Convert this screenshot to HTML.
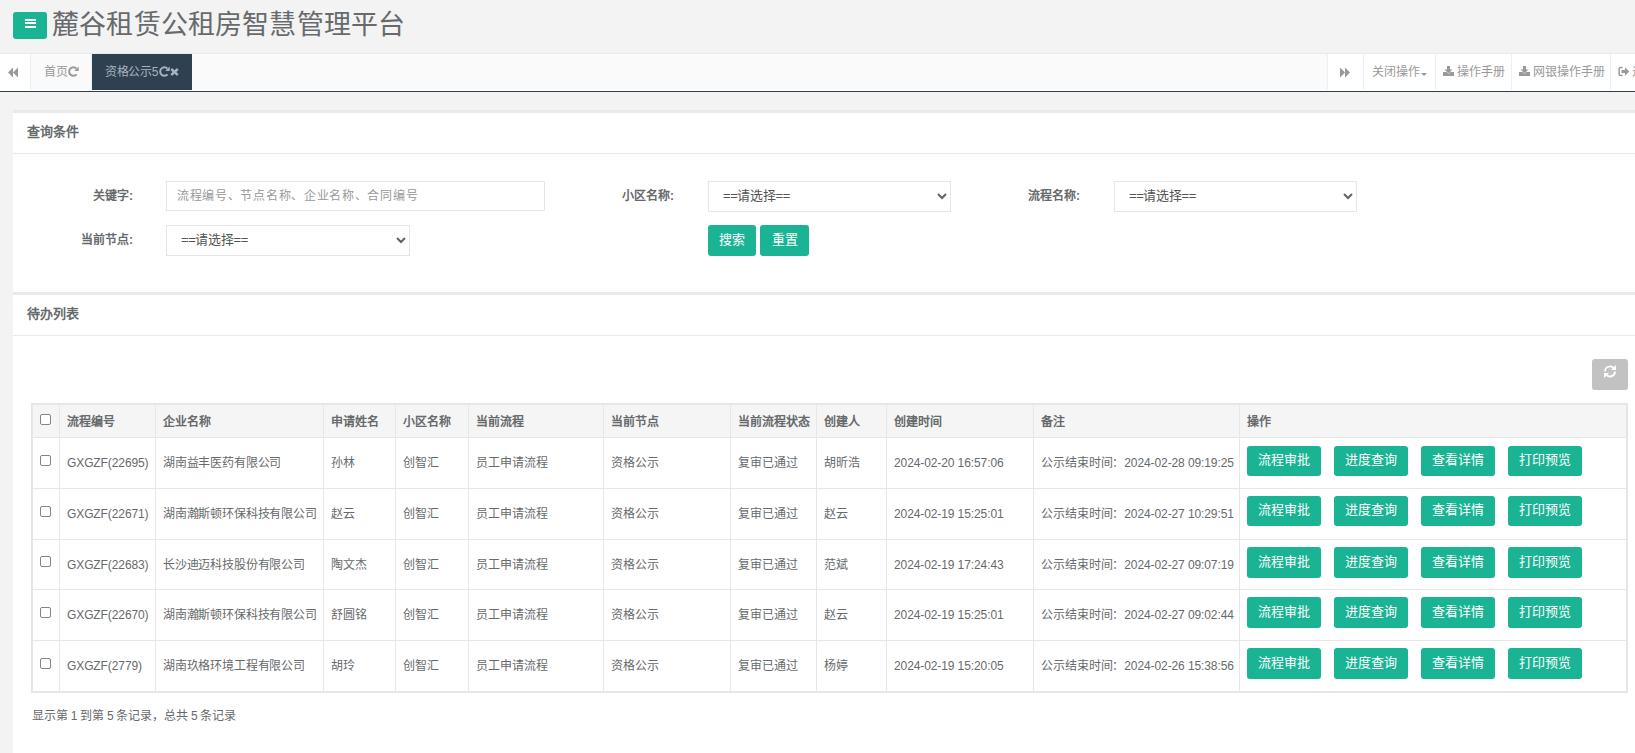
<!DOCTYPE html>
<html lang="zh-CN"><head><meta charset="utf-8"><style>
html,body{margin:0;padding:0;}
body{width:1635px;height:753px;overflow:hidden;position:relative;background:#f3f3f4;font-family:"Liberation Sans", sans-serif;}
body>div,body>svg{position:absolute;}
.t{white-space:nowrap;}
.ic{font-size:12px;}
.lbl{font-size:12px;font-weight:bold;color:#676a6c;line-height:16px;}
.inp{border:1px solid #e5e6e7;background:#fff;}
.btn{background:#1ab394;color:#fff;border-radius:3px;text-align:center;white-space:nowrap;}
.cb{width:9px;height:9px;border:1px solid #858585;border-radius:2px;background:#fff;}
</style></head><body>
<div style="left:0px;top:0px;width:1635px;height:53px;background:#f3f3f4"></div>
<div style="left:13px;top:12px;width:34px;height:27px;background:#1ab394;border-radius:3px"></div>
<div style="left:24.6px;top:18.8px;width:11.9px;height:2.1px;background:#fff"></div>
<div style="left:24.6px;top:22.4px;width:11.9px;height:2.1px;background:#fff"></div>
<div style="left:24.6px;top:26px;width:11.9px;height:2.1px;background:#fff"></div>
<div class="t" style="left:52px;top:7px;font-size:27px;line-height:36px;color:#676a6c;letter-spacing:0.18px">麓谷租赁公租房智慧管理平台</div>
<div style="left:0px;top:53px;width:1635px;height:1px;background:#e7eaec"></div>
<div style="left:0px;top:54px;width:1635px;height:36px;background:#fafafa"></div>
<div style="left:0px;top:90px;width:1635px;height:1px;background:#fff"></div>
<div style="left:0px;top:91px;width:1635px;height:1px;background:#2f4050"></div>
<div style="left:0px;top:54px;width:30px;height:36px;background:#fff"></div>
<div style="left:30px;top:54px;width:1px;height:36px;background:#eee"></div>
<svg style="left:8px;top:67px" width="11" height="11" viewBox="0 0 11 11"><path d="M0 5.5 L5 0.5 V10.5Z M5 5.5 L10 0.5 V10.5Z" fill="#999"/></svg>
<div style="left:91px;top:54px;width:1px;height:36px;background:#eee"></div>
<div class="t" style="left:44px;top:64px;font-size:12px;line-height:16px;color:#999;">首页</div>
<svg style="left:68px;top:66px" width="11" height="11" viewBox="0 0 11 11"><path d="M8.6 8.3A4.2 4.2 0 1 1 8.4 2.6" stroke="#999" stroke-width="2" fill="none"/><path d="M10.7 0.4V4.9H6.2Z" fill="#999"/></svg>
<div style="left:92px;top:54px;width:100px;height:36px;background:#2f4050"></div>
<div class="t" style="left:105px;top:64px;font-size:12px;line-height:16px;color:#a7b1c2;letter-spacing:-0.3px">资格公示5</div>
<svg style="left:159px;top:66px" width="11" height="11" viewBox="0 0 11 11"><path d="M8.6 8.3A4.2 4.2 0 1 1 8.4 2.6" stroke="#a7b1c2" stroke-width="2" fill="none"/><path d="M10.7 0.4V4.9H6.2Z" fill="#a7b1c2"/></svg>
<svg style="left:170px;top:68px" width="9" height="8" viewBox="0 0 9 8"><path d="M1.2 1L7.8 7M7.8 1L1.2 7" stroke="#a7b1c2" stroke-width="2.4"/></svg>
<div style="left:1327px;top:54px;width:308px;height:36px;background:#fff"></div>
<div style="left:1327px;top:54px;width:1px;height:36px;background:#eee"></div>
<div style="left:1363px;top:54px;width:1px;height:36px;background:#eee"></div>
<div style="left:1435px;top:54px;width:1px;height:36px;background:#eee"></div>
<div style="left:1511px;top:54px;width:1px;height:36px;background:#eee"></div>
<div style="left:1610px;top:54px;width:1px;height:36px;background:#eee"></div>
<svg style="left:1339px;top:67px" width="11" height="11" viewBox="0 0 11 11"><path d="M11 5.5 L6 0.5 V10.5Z M6 5.5 L1 0.5 V10.5Z" fill="#999"/></svg>
<div class="t" style="left:1372px;top:64px;font-size:12px;line-height:16px;color:#999;">关闭操作</div>
<svg style="left:1421px;top:73px" width="6" height="3" viewBox="0 0 6 3"><path d="M0 0H6L3 3Z" fill="#999"/></svg>
<svg style="left:1443px;top:66px" width="11" height="10" viewBox="0 0 11 10"><path d="M4 0H7V3.5H9.5L5.5 7.5L1.5 3.5H4Z M0 6H3.5L5.5 8L7.5 6H11V10H0Z" fill="#999"/></svg>
<div class="t" style="left:1457px;top:64px;font-size:12px;line-height:16px;color:#999;">操作手册</div>
<svg style="left:1519px;top:66px" width="11" height="10" viewBox="0 0 11 10"><path d="M4 0H7V3.5H9.5L5.5 7.5L1.5 3.5H4Z M0 6H3.5L5.5 8L7.5 6H11V10H0Z" fill="#999"/></svg>
<div class="t" style="left:1533px;top:64px;font-size:12px;line-height:16px;color:#999;">网银操作手册</div>
<svg style="left:1618px;top:66px" width="12" height="11" viewBox="0 0 12 11"><path d="M4.5 1.6H2.6A1.5 1.5 0 0 0 1.1 3.1V7.9A1.5 1.5 0 0 0 2.6 9.4H4.5" stroke="#999" stroke-width="1.5" fill="none"/><path d="M3.5 4H7V1.3L11.3 5.5L7 9.7V7H3.5Z" fill="#999"/></svg>
<div class="t" style="left:1632px;top:64px;font-size:12px;line-height:16px;color:#999;">退</div>
<div style="left:0px;top:92px;width:1635px;height:661px;background:#f3f3f4"></div>
<div style="left:13px;top:110px;width:1622px;height:3px;background:#e7eaec"></div>
<div style="left:13px;top:113px;width:1622px;height:179px;background:#fff"></div>
<div style="left:13px;top:153px;width:1622px;height:1px;background:#e7eaec"></div>
<div class="t" style="left:27px;top:124px;font-size:13px;line-height:16px;color:#676a6c;font-weight:bold;">查询条件</div>
<div class="t lbl" style="left:13px;top:188px;width:120px;text-align:right">关键字:</div>
<div class="t lbl" style="left:13px;top:232px;width:120px;text-align:right">当前节点:</div>
<div class="t lbl" style="left:554px;top:188px;width:120px;text-align:right">小区名称:</div>
<div class="t lbl" style="left:960px;top:188px;width:120px;text-align:right">流程名称:</div>
<div class="inp" style="left:166px;top:181px;width:377px;height:28px"></div>
<div class="t" style="left:177px;top:188px;font-size:12px;line-height:16px;color:#999;letter-spacing:0.7px">流程编号、节点名称、企业名称、合同编号</div>
<div class="inp" style="left:166px;top:225px;width:242px;height:29px"></div>
<div class="t" style="left:181px;top:232px;font-size:13px;line-height:16px;color:#555;letter-spacing:-0.35px">==请选择==</div>
<svg style="left:396px;top:237px" width="10" height="7" viewBox="0 0 10 7"><path d="M1 1L5 5L9 1" stroke="#5f6368" stroke-width="2" fill="none"/></svg>
<div class="inp" style="left:708px;top:181px;width:241px;height:29px"></div>
<div class="t" style="left:723px;top:188px;font-size:13px;line-height:16px;color:#555;letter-spacing:-0.35px">==请选择==</div>
<svg style="left:937px;top:193px" width="10" height="7" viewBox="0 0 10 7"><path d="M1 1L5 5L9 1" stroke="#5f6368" stroke-width="2" fill="none"/></svg>
<div class="inp" style="left:1114px;top:181px;width:241px;height:29px"></div>
<div class="t" style="left:1129px;top:188px;font-size:13px;line-height:16px;color:#555;letter-spacing:-0.35px">==请选择==</div>
<svg style="left:1343px;top:193px" width="10" height="7" viewBox="0 0 10 7"><path d="M1 1L5 5L9 1" stroke="#5f6368" stroke-width="2" fill="none"/></svg>
<div class="btn" style="left:708px;top:225px;width:48px;height:31px;line-height:29px;font-size:13px">搜索</div>
<div class="btn" style="left:760px;top:225px;width:49px;height:31px;line-height:29px;font-size:13px">重置</div>
<div style="left:13px;top:292px;width:1622px;height:3px;background:#e7eaec"></div>
<div style="left:13px;top:295px;width:1622px;height:458px;background:#fff"></div>
<div style="left:13px;top:335px;width:1622px;height:1px;background:#e7eaec"></div>
<div class="t" style="left:27px;top:306px;font-size:13px;line-height:16px;color:#676a6c;font-weight:bold;">待办列表</div>
<div style="left:1592px;top:359px;width:36px;height:31px;background:#c2c2c2;border-radius:3px"></div>
<svg style="left:1603px;top:365px" width="14" height="13" viewBox="0 0 14 13"><path d="M2 6.5A5 5 0 0 1 11 3.5" stroke="#fff" stroke-width="1.7" fill="none"/><path d="M12 6.5A5 5 0 0 1 3 9.5" stroke="#fff" stroke-width="2" fill="none"/><path d="M13 0V5H8Z M1 13V8H6Z" fill="#fff"/></svg>
<div style="left:31px;top:403px;width:1597px;height:290px;background:#fff"></div>
<div style="left:31px;top:403px;width:1597px;height:1px;background:#e1e6e9"></div>
<div style="left:31px;top:403px;width:1px;height:290px;background:#e1e6e9"></div>
<div style="left:1627px;top:403px;width:1px;height:290px;background:#e1e6e9"></div>
<div style="left:31px;top:692px;width:1597px;height:1px;background:#e1e6e9"></div>
<div style="left:32px;top:404px;width:1595px;height:288px;border:1px solid #e7e7e7;border-top-color:#e5e8ea;box-sizing:border-box;background:#fff"></div>
<div style="left:33px;top:405px;width:1593px;height:32px;background:#f5f5f5"></div>
<div style="left:59px;top:405px;width:1px;height:286px;background:#e7e7e7"></div>
<div style="left:155px;top:405px;width:1px;height:286px;background:#e7e7e7"></div>
<div style="left:323px;top:405px;width:1px;height:286px;background:#e7e7e7"></div>
<div style="left:395px;top:405px;width:1px;height:286px;background:#e7e7e7"></div>
<div style="left:468px;top:405px;width:1px;height:286px;background:#e7e7e7"></div>
<div style="left:603px;top:405px;width:1px;height:286px;background:#e7e7e7"></div>
<div style="left:730px;top:405px;width:1px;height:286px;background:#e7e7e7"></div>
<div style="left:816px;top:405px;width:1px;height:286px;background:#e7e7e7"></div>
<div style="left:886px;top:405px;width:1px;height:286px;background:#e7e7e7"></div>
<div style="left:1033px;top:405px;width:1px;height:286px;background:#e7e7e7"></div>
<div style="left:1239px;top:405px;width:1px;height:286px;background:#e7e7e7"></div>
<div style="left:33px;top:437px;width:1593px;height:1px;background:#e5e8ea"></div>
<div style="left:33px;top:488px;width:1593px;height:1px;background:#e7e7e7"></div>
<div style="left:33px;top:539px;width:1593px;height:1px;background:#e7e7e7"></div>
<div style="left:33px;top:589px;width:1593px;height:1px;background:#e7e7e7"></div>
<div style="left:33px;top:640px;width:1593px;height:1px;background:#e7e7e7"></div>
<div class="t" style="left:67px;top:414px;font-size:12px;line-height:16px;color:#676a6c;font-weight:bold;">流程编号</div>
<div class="t" style="left:163px;top:414px;font-size:12px;line-height:16px;color:#676a6c;font-weight:bold;">企业名称</div>
<div class="t" style="left:331px;top:414px;font-size:12px;line-height:16px;color:#676a6c;font-weight:bold;">申请姓名</div>
<div class="t" style="left:403px;top:414px;font-size:12px;line-height:16px;color:#676a6c;font-weight:bold;">小区名称</div>
<div class="t" style="left:476px;top:414px;font-size:12px;line-height:16px;color:#676a6c;font-weight:bold;">当前流程</div>
<div class="t" style="left:611px;top:414px;font-size:12px;line-height:16px;color:#676a6c;font-weight:bold;">当前节点</div>
<div class="t" style="left:738px;top:414px;font-size:12px;line-height:16px;color:#676a6c;font-weight:bold;">当前流程状态</div>
<div class="t" style="left:824px;top:414px;font-size:12px;line-height:16px;color:#676a6c;font-weight:bold;">创建人</div>
<div class="t" style="left:894px;top:414px;font-size:12px;line-height:16px;color:#676a6c;font-weight:bold;">创建时间</div>
<div class="t" style="left:1041px;top:414px;font-size:12px;line-height:16px;color:#676a6c;font-weight:bold;">备注</div>
<div class="t" style="left:1247px;top:414px;font-size:12px;line-height:16px;color:#676a6c;font-weight:bold;">操作</div>
<div class="cb" style="left:40px;top:414px"></div>
<div class="cb" style="left:40px;top:455px"></div>
<div class="t" style="left:67px;top:455.0px;font-size:12px;line-height:16px;color:#676a6c;letter-spacing:-0.1px">GXGZF(22695)</div>
<div class="t" style="left:163px;top:455.0px;font-size:12px;line-height:16px;color:#676a6c;letter-spacing:-0.18px">湖南益丰医药有限公司</div>
<div class="t" style="left:331px;top:455.0px;font-size:12px;line-height:16px;color:#676a6c;">孙林</div>
<div class="t" style="left:403px;top:455.0px;font-size:12px;line-height:16px;color:#676a6c;">创智汇</div>
<div class="t" style="left:476px;top:455.0px;font-size:12px;line-height:16px;color:#676a6c;">员工申请流程</div>
<div class="t" style="left:611px;top:455.0px;font-size:12px;line-height:16px;color:#676a6c;">资格公示</div>
<div class="t" style="left:738px;top:455.0px;font-size:12px;line-height:16px;color:#676a6c;">复审已通过</div>
<div class="t" style="left:824px;top:455.0px;font-size:12px;line-height:16px;color:#676a6c;">胡昕浩</div>
<div class="t" style="left:894px;top:455.0px;font-size:12px;line-height:16px;color:#676a6c;letter-spacing:-0.1px">2024-02-20 16:57:06</div>
<div class="t" style="left:1041px;top:455.0px;font-size:12px;line-height:16px;color:#676a6c;letter-spacing:-0.1px">公示结束时间：2024-02-28 09:19:25</div>
<div class="btn" style="left:1247px;top:446px;width:74px;height:30px;line-height:28px;font-size:13px">流程审批</div>
<div class="btn" style="left:1334px;top:446px;width:74px;height:30px;line-height:28px;font-size:13px">进度查询</div>
<div class="btn" style="left:1421px;top:446px;width:74px;height:30px;line-height:28px;font-size:13px">查看详情</div>
<div class="btn" style="left:1508px;top:446px;width:74px;height:30px;line-height:28px;font-size:13px">打印预览</div>
<div class="cb" style="left:40px;top:506px"></div>
<div class="t" style="left:67px;top:506.0px;font-size:12px;line-height:16px;color:#676a6c;letter-spacing:-0.1px">GXGZF(22671)</div>
<div class="t" style="left:163px;top:506.0px;font-size:12px;line-height:16px;color:#676a6c;letter-spacing:-0.18px">湖南瀚斯顿环保科技有限公司</div>
<div class="t" style="left:331px;top:506.0px;font-size:12px;line-height:16px;color:#676a6c;">赵云</div>
<div class="t" style="left:403px;top:506.0px;font-size:12px;line-height:16px;color:#676a6c;">创智汇</div>
<div class="t" style="left:476px;top:506.0px;font-size:12px;line-height:16px;color:#676a6c;">员工申请流程</div>
<div class="t" style="left:611px;top:506.0px;font-size:12px;line-height:16px;color:#676a6c;">资格公示</div>
<div class="t" style="left:738px;top:506.0px;font-size:12px;line-height:16px;color:#676a6c;">复审已通过</div>
<div class="t" style="left:824px;top:506.0px;font-size:12px;line-height:16px;color:#676a6c;">赵云</div>
<div class="t" style="left:894px;top:506.0px;font-size:12px;line-height:16px;color:#676a6c;letter-spacing:-0.1px">2024-02-19 15:25:01</div>
<div class="t" style="left:1041px;top:506.0px;font-size:12px;line-height:16px;color:#676a6c;letter-spacing:-0.1px">公示结束时间：2024-02-27 10:29:51</div>
<div class="btn" style="left:1247px;top:496px;width:74px;height:30px;line-height:28px;font-size:13px">流程审批</div>
<div class="btn" style="left:1334px;top:496px;width:74px;height:30px;line-height:28px;font-size:13px">进度查询</div>
<div class="btn" style="left:1421px;top:496px;width:74px;height:30px;line-height:28px;font-size:13px">查看详情</div>
<div class="btn" style="left:1508px;top:496px;width:74px;height:30px;line-height:28px;font-size:13px">打印预览</div>
<div class="cb" style="left:40px;top:556px"></div>
<div class="t" style="left:67px;top:556.5px;font-size:12px;line-height:16px;color:#676a6c;letter-spacing:-0.1px">GXGZF(22683)</div>
<div class="t" style="left:163px;top:556.5px;font-size:12px;line-height:16px;color:#676a6c;letter-spacing:-0.18px">长沙迪迈科技股份有限公司</div>
<div class="t" style="left:331px;top:556.5px;font-size:12px;line-height:16px;color:#676a6c;">陶文杰</div>
<div class="t" style="left:403px;top:556.5px;font-size:12px;line-height:16px;color:#676a6c;">创智汇</div>
<div class="t" style="left:476px;top:556.5px;font-size:12px;line-height:16px;color:#676a6c;">员工申请流程</div>
<div class="t" style="left:611px;top:556.5px;font-size:12px;line-height:16px;color:#676a6c;">资格公示</div>
<div class="t" style="left:738px;top:556.5px;font-size:12px;line-height:16px;color:#676a6c;">复审已通过</div>
<div class="t" style="left:824px;top:556.5px;font-size:12px;line-height:16px;color:#676a6c;">范斌</div>
<div class="t" style="left:894px;top:556.5px;font-size:12px;line-height:16px;color:#676a6c;letter-spacing:-0.1px">2024-02-19 17:24:43</div>
<div class="t" style="left:1041px;top:556.5px;font-size:12px;line-height:16px;color:#676a6c;letter-spacing:-0.1px">公示结束时间：2024-02-27 09:07:19</div>
<div class="btn" style="left:1247px;top:547px;width:74px;height:31px;line-height:29px;font-size:13px">流程审批</div>
<div class="btn" style="left:1334px;top:547px;width:74px;height:31px;line-height:29px;font-size:13px">进度查询</div>
<div class="btn" style="left:1421px;top:547px;width:74px;height:31px;line-height:29px;font-size:13px">查看详情</div>
<div class="btn" style="left:1508px;top:547px;width:74px;height:31px;line-height:29px;font-size:13px">打印预览</div>
<div class="cb" style="left:40px;top:607px"></div>
<div class="t" style="left:67px;top:607.0px;font-size:12px;line-height:16px;color:#676a6c;letter-spacing:-0.1px">GXGZF(22670)</div>
<div class="t" style="left:163px;top:607.0px;font-size:12px;line-height:16px;color:#676a6c;letter-spacing:-0.18px">湖南瀚斯顿环保科技有限公司</div>
<div class="t" style="left:331px;top:607.0px;font-size:12px;line-height:16px;color:#676a6c;">舒圆铭</div>
<div class="t" style="left:403px;top:607.0px;font-size:12px;line-height:16px;color:#676a6c;">创智汇</div>
<div class="t" style="left:476px;top:607.0px;font-size:12px;line-height:16px;color:#676a6c;">员工申请流程</div>
<div class="t" style="left:611px;top:607.0px;font-size:12px;line-height:16px;color:#676a6c;">资格公示</div>
<div class="t" style="left:738px;top:607.0px;font-size:12px;line-height:16px;color:#676a6c;">复审已通过</div>
<div class="t" style="left:824px;top:607.0px;font-size:12px;line-height:16px;color:#676a6c;">赵云</div>
<div class="t" style="left:894px;top:607.0px;font-size:12px;line-height:16px;color:#676a6c;letter-spacing:-0.1px">2024-02-19 15:25:01</div>
<div class="t" style="left:1041px;top:607.0px;font-size:12px;line-height:16px;color:#676a6c;letter-spacing:-0.1px">公示结束时间：2024-02-27 09:02:44</div>
<div class="btn" style="left:1247px;top:597px;width:74px;height:31px;line-height:29px;font-size:13px">流程审批</div>
<div class="btn" style="left:1334px;top:597px;width:74px;height:31px;line-height:29px;font-size:13px">进度查询</div>
<div class="btn" style="left:1421px;top:597px;width:74px;height:31px;line-height:29px;font-size:13px">查看详情</div>
<div class="btn" style="left:1508px;top:597px;width:74px;height:31px;line-height:29px;font-size:13px">打印预览</div>
<div class="cb" style="left:40px;top:658px"></div>
<div class="t" style="left:67px;top:658.0px;font-size:12px;line-height:16px;color:#676a6c;letter-spacing:-0.1px">GXGZF(2779)</div>
<div class="t" style="left:163px;top:658.0px;font-size:12px;line-height:16px;color:#676a6c;letter-spacing:-0.18px">湖南玖格环境工程有限公司</div>
<div class="t" style="left:331px;top:658.0px;font-size:12px;line-height:16px;color:#676a6c;">胡玲</div>
<div class="t" style="left:403px;top:658.0px;font-size:12px;line-height:16px;color:#676a6c;">创智汇</div>
<div class="t" style="left:476px;top:658.0px;font-size:12px;line-height:16px;color:#676a6c;">员工申请流程</div>
<div class="t" style="left:611px;top:658.0px;font-size:12px;line-height:16px;color:#676a6c;">资格公示</div>
<div class="t" style="left:738px;top:658.0px;font-size:12px;line-height:16px;color:#676a6c;">复审已通过</div>
<div class="t" style="left:824px;top:658.0px;font-size:12px;line-height:16px;color:#676a6c;">杨婷</div>
<div class="t" style="left:894px;top:658.0px;font-size:12px;line-height:16px;color:#676a6c;letter-spacing:-0.1px">2024-02-19 15:20:05</div>
<div class="t" style="left:1041px;top:658.0px;font-size:12px;line-height:16px;color:#676a6c;letter-spacing:-0.1px">公示结束时间：2024-02-26 15:38:56</div>
<div class="btn" style="left:1247px;top:648px;width:74px;height:31px;line-height:29px;font-size:13px">流程审批</div>
<div class="btn" style="left:1334px;top:648px;width:74px;height:31px;line-height:29px;font-size:13px">进度查询</div>
<div class="btn" style="left:1421px;top:648px;width:74px;height:31px;line-height:29px;font-size:13px">查看详情</div>
<div class="btn" style="left:1508px;top:648px;width:74px;height:31px;line-height:29px;font-size:13px">打印预览</div>
<div class="t" style="left:32px;top:708px;font-size:12px;line-height:16px;color:#676a6c;word-spacing:-0.6px">显示第 1 到第 5 条记录，总共 5 条记录</div>
</body></html>
